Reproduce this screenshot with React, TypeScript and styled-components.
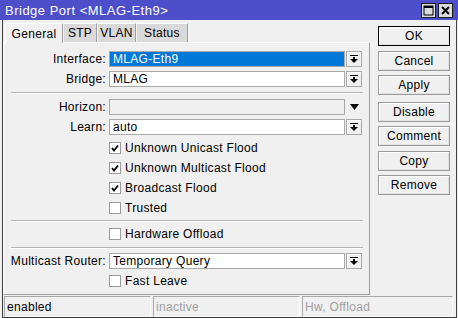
import React from 'react';
import styled, { createGlobalStyle } from 'styled-components';

const GlobalStyle = createGlobalStyle`
  html, body {
    margin: 0;
    padding: 0;
    background: #f0f0f0;
  }
  body {
    font-family: "Liberation Sans", Arial, sans-serif;
    font-size: 12px;
    letter-spacing: 0.3px;
    color: #000;
  }
  * { box-sizing: border-box; }
`;

const Window = styled.div`
  width: 458px;
  height: 318px;
  display: flex;
  flex-direction: column;
  background: #f0f0f0;
  overflow: hidden;
`;

const TitleBar = styled.div`
  height: 20px;
  flex: none;
  display: flex;
  align-items: center;
  padding: 0 5px 0 5px;
  background: #4c4fc9;
  color: #fff;
  font-size: 13px;
  letter-spacing: 0.5px;
`;

const Title = styled.div`
  flex: 1;
  white-space: nowrap;
`;

const TitleButtons = styled.div`
  display: flex;
  gap: 2px;
`;

const TitleButton = styled.div`
  width: 15px;
  height: 15px;
  display: flex;
  align-items: center;
  justify-content: center;
  background: #dcdcdc;
  border: 1px solid #1a1a1a;
`;

const Frame = styled.div`
  flex: 1;
  display: flex;
  flex-direction: column;
  margin: 0 1px 0 2px;
  border-left: 1px solid #3c3c3c;
  border-right: 1px solid #3c3c3c;
  border-bottom: 1px solid #3c3c3c;
`;

const Main = styled.div`
  display: flex;
  padding-top: 3px;
`;

const LeftSide = styled.div`
  width: 367px;
  display: flex;
  flex-direction: column;
`;

const TabStrip = styled.div`
  display: flex;
  height: 19px;
  margin-left: 2px;
`;

const Tab = styled.div<{ $active?: boolean; $w: number }>`
  width: ${p => p.$w}px;
  height: ${p => (p.$active ? 20 : 19)}px;
  display: flex;
  align-items: center;
  justify-content: center;
  background: ${p => (p.$active ? '#f0f0f0' : '#d9d9d9')};
  border-top: 1px solid #fff;
  border-left: 1px solid ${p => (p.$active ? '#fff' : '#f4f4f4')};
  border-right: 1px solid #a0a0a0;
  position: relative;
  z-index: ${p => (p.$active ? 2 : 1)};
`;

const Panel = styled.div`
  height: 253px;
  display: flex;
  flex-direction: column;
  padding-top: 8px;
  border: 1px solid #a0a0a0;
  border-top-color: #fff;
  border-left-color: #fff;
`;

const FieldRow = styled.div<{ $mt?: number }>`
  display: flex;
  align-items: center;
  height: 16px;
  margin-top: ${p => p.$mt ?? 0}px;
`;

const Label = styled.div`
  width: 102px;
  margin-right: 3px;
  text-align: right;
  white-space: nowrap;
`;

const Field = styled.div<{ $selected?: boolean; $disabled?: boolean }>`
  width: 236px;
  height: 16px;
  display: flex;
  align-items: center;
  padding-left: 3px;
  border: 1px solid #a8a8a8;
  background: ${p => (p.$selected ? '#0078d7' : p.$disabled ? '#f0f0f0' : '#fff')};
  color: ${p => (p.$selected ? '#fff' : '#000')};
  white-space: nowrap;
`;

const DropButton = styled.div`
  width: 16px;
  height: 16px;
  margin-left: 1px;
  display: flex;
  align-items: center;
  justify-content: center;
  background: #f0f0f0;
  border: 1px solid #a8a8a8;
  box-shadow: inset 1px 1px 0 #fff;
`;

const DropArrow = styled.div`
  width: 17px;
  margin-left: 1px;
  display: flex;
  align-items: center;
  justify-content: center;
`;

const Separator = styled.div<{ $mt: number }>`
  margin: ${p => p.$mt}px 0 0 7px;
  width: 352px;
  height: 2px;
  border-top: 1px solid #b4b4b4;
  border-bottom: 1px solid #fff;
`;

const CheckRow = styled.div<{ $mt?: number }>`
  display: flex;
  align-items: center;
  gap: 4px;
  height: 20px;
  padding-left: 105px;
  margin-top: ${p => p.$mt ?? 0}px;
`;

const Box = styled.div`
  width: 12px;
  height: 12px;
  display: flex;
  align-items: center;
  justify-content: center;
  background: #fff;
  border: 1px solid #9a9a9a;
`;

const Buttons = styled.div`
  width: 72px;
  margin-left: 8px;
  padding-top: 3px;
  display: flex;
  flex-direction: column;
`;

const Button = styled.div<{ $default?: boolean; $mt: number }>`
  height: 20px;
  margin-top: ${p => p.$mt}px;
  display: flex;
  align-items: center;
  justify-content: center;
  background: #f0f0f0;
  border: 1px solid ${p => (p.$default ? '#000' : '#9a9a9a')};
  box-shadow: inset 1px 1px 0 #fff, inset -1px -1px 0 #e2e2e2;
`;

const StatusBar = styled.div`
  display: flex;
  gap: 2px;
  margin: 1px 0 0 1px;
  height: 21px;
`;

const StatusField = styled.div<{ $w: number; $dim?: boolean }>`
  width: ${p => p.$w}px;
  display: flex;
  align-items: center;
  padding-left: 2px;
  border: 1px solid #a8a8a8;
  border-right-color: #fafafa;
  border-bottom-color: #fafafa;
  color: ${p => (p.$dim ? '#a0a0a0' : '#000')};
`;

const DownIcon = () => (
  <svg width="8" height="8" viewBox="0 0 8 8">
    <rect x="0" y="0" width="8" height="1" fill="#000" />
    <rect x="3" y="2" width="2" height="2" fill="#000" />
    <polygon points="0,4 8,4 4,8" fill="#000" />
  </svg>
);

const Check = () => (
  <svg width="8" height="8" viewBox="0 0 8 8">
    <polyline points="1,4 3,6.5 7,1.5" fill="none" stroke="#000" strokeWidth="1.8" />
  </svg>
);

const CheckItem = ({ label, checked, mt }: { label: string; checked?: boolean; mt?: number }) => (
  <CheckRow $mt={mt}>
    <Box>{checked && <Check />}</Box>
    <span>{label}</span>
  </CheckRow>
);

export default function App() {
  return (
    <>
      <GlobalStyle />
      <Window>
        <TitleBar>
          <Title>Bridge Port &lt;MLAG-Eth9&gt;</Title>
          <TitleButtons>
            <TitleButton>
              <svg width="11" height="11" viewBox="0 0 11 11">
                <rect x="1" y="1" width="9" height="9" fill="none" stroke="#000" strokeWidth="1" />
                <rect x="1" y="1" width="9" height="2" fill="#000" />
              </svg>
            </TitleButton>
            <TitleButton>
              <svg width="11" height="11" viewBox="0 0 11 11">
                <path d="M2 2 L9 9 M9 2 L2 9" stroke="#000" strokeWidth="2" />
              </svg>
            </TitleButton>
          </TitleButtons>
        </TitleBar>
        <Frame>
          <Main>
            <LeftSide>
              <TabStrip>
                <Tab $active $w={58}>General</Tab>
                <Tab $w={34}>STP</Tab>
                <Tab $w={39}>VLAN</Tab>
                <Tab $w={52}>Status</Tab>
              </TabStrip>
              <Panel>
                <FieldRow>
                  <Label>Interface:</Label>
                  <Field $selected>MLAG-Eth9</Field>
                  <DropButton><DownIcon /></DropButton>
                </FieldRow>
                <FieldRow $mt={4}>
                  <Label>Bridge:</Label>
                  <Field>MLAG</Field>
                  <DropButton><DownIcon /></DropButton>
                </FieldRow>
                <Separator $mt={5} />
                <FieldRow $mt={5}>
                  <Label>Horizon:</Label>
                  <Field $disabled />
                  <DropArrow>
                    <svg width="9" height="6" viewBox="0 0 9 6">
                      <polygon points="0,0 9,0 4.5,6" fill="#000" />
                    </svg>
                  </DropArrow>
                </FieldRow>
                <FieldRow $mt={4}>
                  <Label>Learn:</Label>
                  <Field>auto</Field>
                  <DropButton><DownIcon /></DropButton>
                </FieldRow>
                <CheckItem mt={3} checked label="Unknown Unicast Flood" />
                <CheckItem checked label="Unknown Multicast Flood" />
                <CheckItem checked label="Broadcast Flood" />
                <CheckItem label="Trusted" />
                <Separator $mt={2} />
                <CheckItem mt={2} label="Hardware Offload" />
                <Separator $mt={3} />
                <FieldRow $mt={4}>
                  <Label>Multicast Router:</Label>
                  <Field>Temporary Query</Field>
                  <DropButton><DownIcon /></DropButton>
                </FieldRow>
                <CheckItem mt={2} label="Fast Leave" />
              </Panel>
            </LeftSide>
            <Buttons>
              <Button $default $mt={0}>OK</Button>
              <Button $mt={5}>Cancel</Button>
              <Button $mt={4}>Apply</Button>
              <Button $mt={7}>Disable</Button>
              <Button $mt={4}>Comment</Button>
              <Button $mt={5}>Copy</Button>
              <Button $mt={4}>Remove</Button>
            </Buttons>
          </Main>
          <StatusBar>
            <StatusField $w={147}>enabled</StatusField>
            <StatusField $w={147} $dim>inactive</StatusField>
            <StatusField $w={151} $dim>Hw, Offload</StatusField>
          </StatusBar>
        </Frame>
      </Window>
    </>
  );
}
